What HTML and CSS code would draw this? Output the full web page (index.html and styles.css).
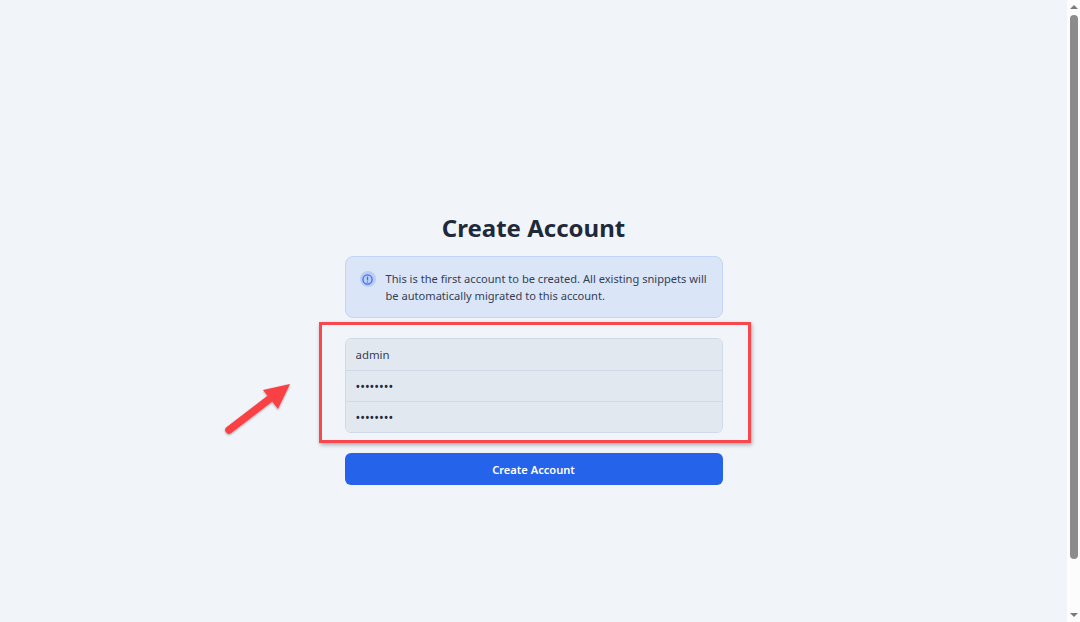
FILE: index.html
```html
<!DOCTYPE html>
<html lang="en">
<head>
    <meta charset="UTF-8">
    <meta name="viewport" content="width=device-width, initial-scale=1.0">
    <title>Create Account</title>
    <link rel="stylesheet" href="styles.css">
</head>
<body>
    <div class="page">
        <main class="register">
            <h1>Create Account</h1>

            <div class="notice">
                <span class="notice-icon">
                    <svg width="11" height="11" viewBox="0 0 12 12" fill="none" stroke="#3b6ff0" stroke-width="1.4" stroke-linecap="round">
                        <circle cx="6" cy="6" r="5"/>
                        <path d="M6 3.4v3"/>
                        <path d="M6 8.5v.1"/>
                    </svg>
                </span>
                <p>This is the first account to be created. All existing snippets will be automatically migrated to this account.</p>
            </div>

            <form class="fields" onsubmit="return false;">
                <div class="field-group">
                    <input type="text" value="admin" aria-label="Username">
                    <input class="secret" type="password" value="password" aria-label="Password">
                    <input class="secret" type="password" value="password" aria-label="Confirm password">
                </div>
                <button class="submit">Create Account</button>
            </form>
        </main>

        <!-- annotation drawn over the screenshot -->
        <div class="highlight"></div>
        <svg class="arrow" width="80" height="66" viewBox="0 0 80 66">
            <defs>
                <filter id="arrowShadow" x="-20%" y="-20%" width="140%" height="140%">
                    <feDropShadow dx="0" dy="1" stdDeviation="1.2" flood-color="#000" flood-opacity="0.35"/>
                </filter>
            </defs>
            <g filter="url(#arrowShadow)">
                <path d="M7 54 L50 21" stroke="#f94144" stroke-width="7.5" stroke-linecap="round" fill="none"/>
                <path d="M68 8 L41 14 L56 33 Z" fill="#f94144"/>
            </g>
        </svg>
    </div>

    <div class="scrollbar">
        <span class="scroll-up"></span>
        <div class="scroll-thumb"></div>
        <span class="scroll-down"></span>
    </div>
</body>
</html>
```

FILE: styles.css
```css
* {
    box-sizing: border-box;
}

html, body {
    height: 100%;
}

body {
    font-family: 'Noto Sans', sans-serif;
    margin: 0;
    background-color: #f1f5f9;
    color: #1e293b;
    display: flex;
    overflow: hidden;
}

.page {
    flex: 1;
    position: relative;
    padding-top: 213px;
}

.register {
    width: 378px;
    margin: 0 auto;
}

h1 {
    font-size: 24px;
    font-weight: 700;
    line-height: 29px;
    text-align: center;
    margin: 0 0 14px;
}

.notice {
    display: flex;
    gap: 10px;
    height: 62px;
    padding: 13px 8px 0 14px;
    background-color: #dbe5f8;
    border: 1px solid #c2d5f6;
    border-radius: 8px;
}

.notice-icon {
    flex: none;
    width: 16px;
    height: 16px;
    margin-top: 1px;
    border-radius: 50%;
    background-color: #b9cdf6;
    display: flex;
    align-items: center;
    justify-content: center;
}

.notice p {
    margin: 0;
    font-size: 11.1px;
    line-height: 17px;
    color: #334155;
}

.fields {
    margin-top: 20px;
}

.field-group {
    border: 1px solid #d0d9e6;
    border-radius: 6px;
    overflow: hidden;
}

.field-group input {
    display: block;
    width: 100%;
    height: 31px;
    padding: 0 10px;
    border: none;
    border-top: 1px solid #d0d9e6;
    background-color: #e2e8f0;
    color: #334155;
    font-family: 'Noto Sans', sans-serif;
    font-size: 11.4px;
    outline: none;
}

.field-group input:first-child {
    border-top: none;
}

.field-group .secret {
    font-size: 12.5px;
    color: #1e293b;
}

.submit {
    display: block;
    width: 100%;
    height: 32px;
    margin-top: 20px;
    background-color: #2563eb;
    color: #fff;
    border: none;
    border-radius: 6px;
    font-family: 'Noto Sans', sans-serif;
    font-size: 11.1px;
    font-weight: 600;
}

.highlight {
    position: absolute;
    left: 319px;
    top: 322px;
    width: 432px;
    height: 121px;
    border: 3px solid #f9484d;
    box-shadow: 1px 2px 4px rgba(0, 0, 0, 0.3);
}

.arrow {
    position: absolute;
    left: 222px;
    top: 376px;
}

.scrollbar {
    flex: none;
    width: 13px;
    background-color: #fcfcfc;
    position: relative;
}

.scroll-thumb {
    position: absolute;
    left: 3px;
    right: 2px;
    top: 15px;
    height: 544px;
    background-color: #8c8c8c;
    border-radius: 4px;
}

.scroll-up,
.scroll-down {
    position: absolute;
    left: 3px;
    width: 0;
    height: 0;
    border-left: 4px solid transparent;
    border-right: 4px solid transparent;
}

.scroll-up {
    top: 5px;
    border-bottom: 4px solid #7a7a7a;
}

.scroll-down {
    bottom: 5px;
    border-top: 4px solid #7a7a7a;
}
```
